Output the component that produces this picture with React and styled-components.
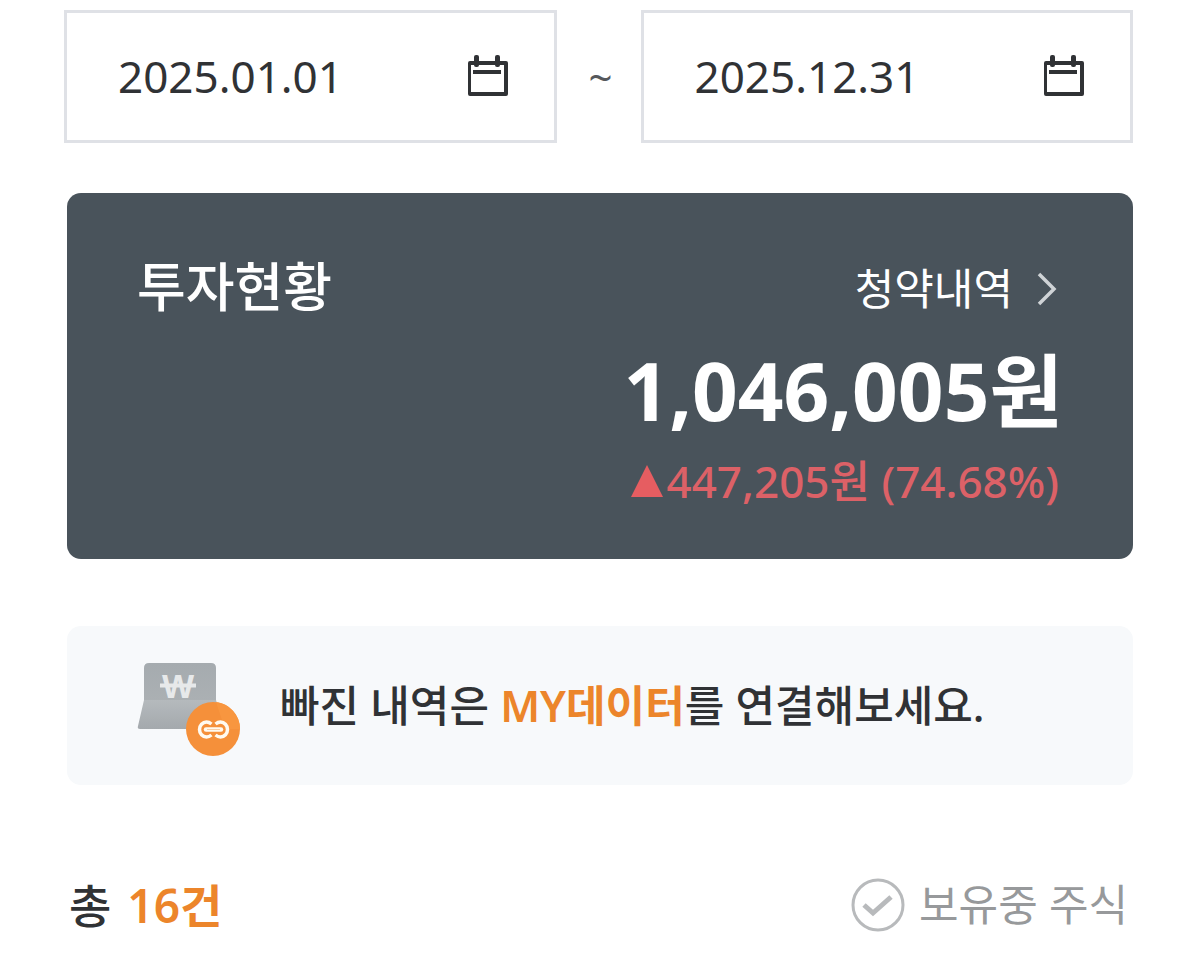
import React from 'react';
import styled, { createGlobalStyle } from 'styled-components';

const Global = createGlobalStyle`
  * { box-sizing: border-box; }
  body { margin: 0; background: #fff; color: #303235; font-family: "Noto Sans", "Noto Sans CJK KR", sans-serif; }
`;
const Page = styled.main`
  padding: 10px 67px 0 64px;
`;
const Range = styled.form`
  display: flex;
  align-items: center;
`;
const DateBox = styled.label`
  flex: 1;
  min-width: 0;
  height: 133px;
  padding: 0 45px 2px 51px;
  border: 3px solid #dfe1e6;
  display: flex;
  align-items: center;
  justify-content: space-between;
`;
const DateInput = styled.input`
  width: 260px;
  min-width: 0;
  border: 0;
  padding: 0;
  outline: 0;
  background: none;
  color: #303235;
  font-family: "Noto Sans", sans-serif;
  font-size: 44px;
  line-height: 60px;
`;
const Tilde = styled.span`
  width: 84px;
  padding-left: 4px;
  text-align: center;
  font-size: 42px;
  line-height: 60px;
  color: #55585c;
`;
const Card = styled.section`
  margin: 50px 0 0 3px;
  padding: 56px 70px 45px;
  border-radius: 14px;
  background: #49535b;
  color: #fff;
`;
const CardTop = styled.div`
  display: flex;
  justify-content: space-between;
  align-items: center;
`;
const Title = styled.h2`
  margin: 0;
  font-size: 53px;
  line-height: 76px;
  font-weight: 500;
`;
const PlainButton = styled.button`
  display: flex;
  align-items: center;
  border: 0;
  background: none;
  color: inherit;
  font-family: inherit;
  cursor: pointer;
`;
const MoreButton = styled(PlainButton)`
  gap: 24px;
  padding: 4px 6px 0 0;
  font-size: 43px;
  line-height: 72px;
`;
const Amount = styled.p`
  margin: 15px 0 0;
  text-align: right;
  font-size: 80px;
  line-height: 100px;
  font-weight: 700;
`;
const Change = styled.p`
  margin: 8px 0 0;
  padding-right: 4px;
  display: flex;
  justify-content: flex-end;
  align-items: center;
  gap: 3px;
  font-size: 44px;
  line-height: 66px;
  font-weight: 500;
  color: #dc6167;
`;
const Banner = styled(PlainButton)`
  margin: 67px 0 0 3px;
  padding: 0 70px;
  width: calc(100% - 3px);
  height: 159px;
  border-radius: 14px;
  background: #f7f9fb;
  gap: 39px;
  font-size: 43px;
  line-height: 64px;
  font-weight: 500;
  text-align: left;
`;
const Accent = styled.strong`
  color: #ec852b;
  font-weight: 600;
`;
const Footer = styled.div`
  margin-top: 84px;
  padding: 0 5px;
  display: flex;
  justify-content: space-between;
  align-items: center;
  height: 72px;
`;
const Count = styled.p`
  margin: 0;
  display: flex;
  gap: 16px;
  font-size: 46px;
  line-height: 66px;
  font-weight: 500;
`;
const Held = styled(PlainButton)`
  gap: 14px;
  padding: 0;
  color: #97999b;
  font-size: 43px;
  line-height: 66px;
`;

const Calendar = () => (
  <svg width="42" height="42" viewBox="0 0 42 42" fill="#303235" aria-hidden="true">
    <path fillRule="evenodd" d="M3 6H39Q41 6 41 8V39Q41 41 39 41H3Q1 41 1 39V8Q1 6 3 6ZM4 10V37H37V10Z" />
    <rect x="6" y="15" width="28" height="4" />
    <rect x="7" y="0" width="5" height="12" rx="2" />
    <rect x="28" y="0" width="5" height="12" rx="2" />
  </svg>
);

const LinkedAccount = () => (
  <svg width="104" height="100" viewBox="0 0 104 100" fill="none" aria-hidden="true">
    <defs>
      <linearGradient id="screen" x1="0" y1="0" x2="0" y2="1">
        <stop offset="0" stopColor="#a5abaf" />
        <stop offset="1" stopColor="#abb0b3" />
      </linearGradient>
      <linearGradient id="base" x1="0" y1="0" x2="0" y2="1">
        <stop offset="0" stopColor="#b5babd" />
        <stop offset="1" stopColor="#a4a9ad" />
      </linearGradient>
    </defs>
    <path d="M7 44V12Q7 7 12 7H74Q79 7 79 12V44Z" fill="url(#screen)" />
    <path d="M7 44H79L88 73H3Q0 73 1 70Z" fill="url(#base)" />
    <text x="41" y="42" textAnchor="middle" fill="#e7e9ea" fontFamily="Liberation Sans, sans-serif" fontWeight="700" fontSize="34">W</text>
    <path d="M23 29.5H59" stroke="#e7e9ea" strokeWidth="4" />
    <circle cx="76" cy="73" r="27" fill="#f5903a" />
    <path d="M79 46L88 73H103A27 27 0 0 0 79 46Z" fill="#f8963f" />
    <g stroke="#fffaf0" strokeWidth="3.5">
      <path d="M74.5 68Q72 66 69.5 66A7 7.5 0 0 0 69.5 81Q72 81 74.5 79" />
      <path d="M78.5 68Q81 66 83.5 66A7 7.5 0 0 1 83.5 81Q81 81 78.5 79" />
      <path d="M69 73.5H84" strokeWidth="4.5" strokeLinecap="round" />
    </g>
    <path d="M70 73.5H83" stroke="#f9cfa6" strokeWidth="1" />
  </svg>
);

export default function App() {
  return (
    <>
      <Global />
      <Page>
        <Range>
          <DateBox><DateInput aria-label="시작일" defaultValue="2025.01.01" /><Calendar /></DateBox>
          <Tilde>~</Tilde>
          <DateBox><DateInput aria-label="종료일" defaultValue="2025.12.31" /><Calendar /></DateBox>
        </Range>
        <Card>
          <CardTop>
            <Title>투자현황</Title>
            <MoreButton type="button">
              청약내역
              <svg width="20" height="34" viewBox="0 0 20 34" fill="none" stroke="#cfd3d6" strokeWidth="3.5" aria-hidden="true"><path d="M2 2L17 17L2 32" /></svg>
            </MoreButton>
          </CardTop>
          <Amount>1,046,005원</Amount>
          <Change>
            <svg width="32" height="32" viewBox="0 0 32 32" fill="#e65d61" aria-hidden="true"><path d="M16 0L32 32H0Z" /></svg>
            447,205원 (74.68%)
          </Change>
        </Card>
        <Banner type="button">
          <LinkedAccount />
          <span>빠진 내역은 <Accent>MY데이터</Accent>를 연결해보세요.</span>
        </Banner>
        <Footer>
          <Count><span>총</span> <Accent>16건</Accent></Count>
          <Held type="button">
            <svg width="54" height="54" viewBox="0 0 54 54" fill="none" stroke="#b8babc" aria-hidden="true">
              <circle cx="27" cy="27" r="25" strokeWidth="3" />
              <path d="M13 27L22 35L40 19" strokeWidth="5" />
            </svg>
            보유중 주식
          </Held>
        </Footer>
      </Page>
    </>
  );
}
